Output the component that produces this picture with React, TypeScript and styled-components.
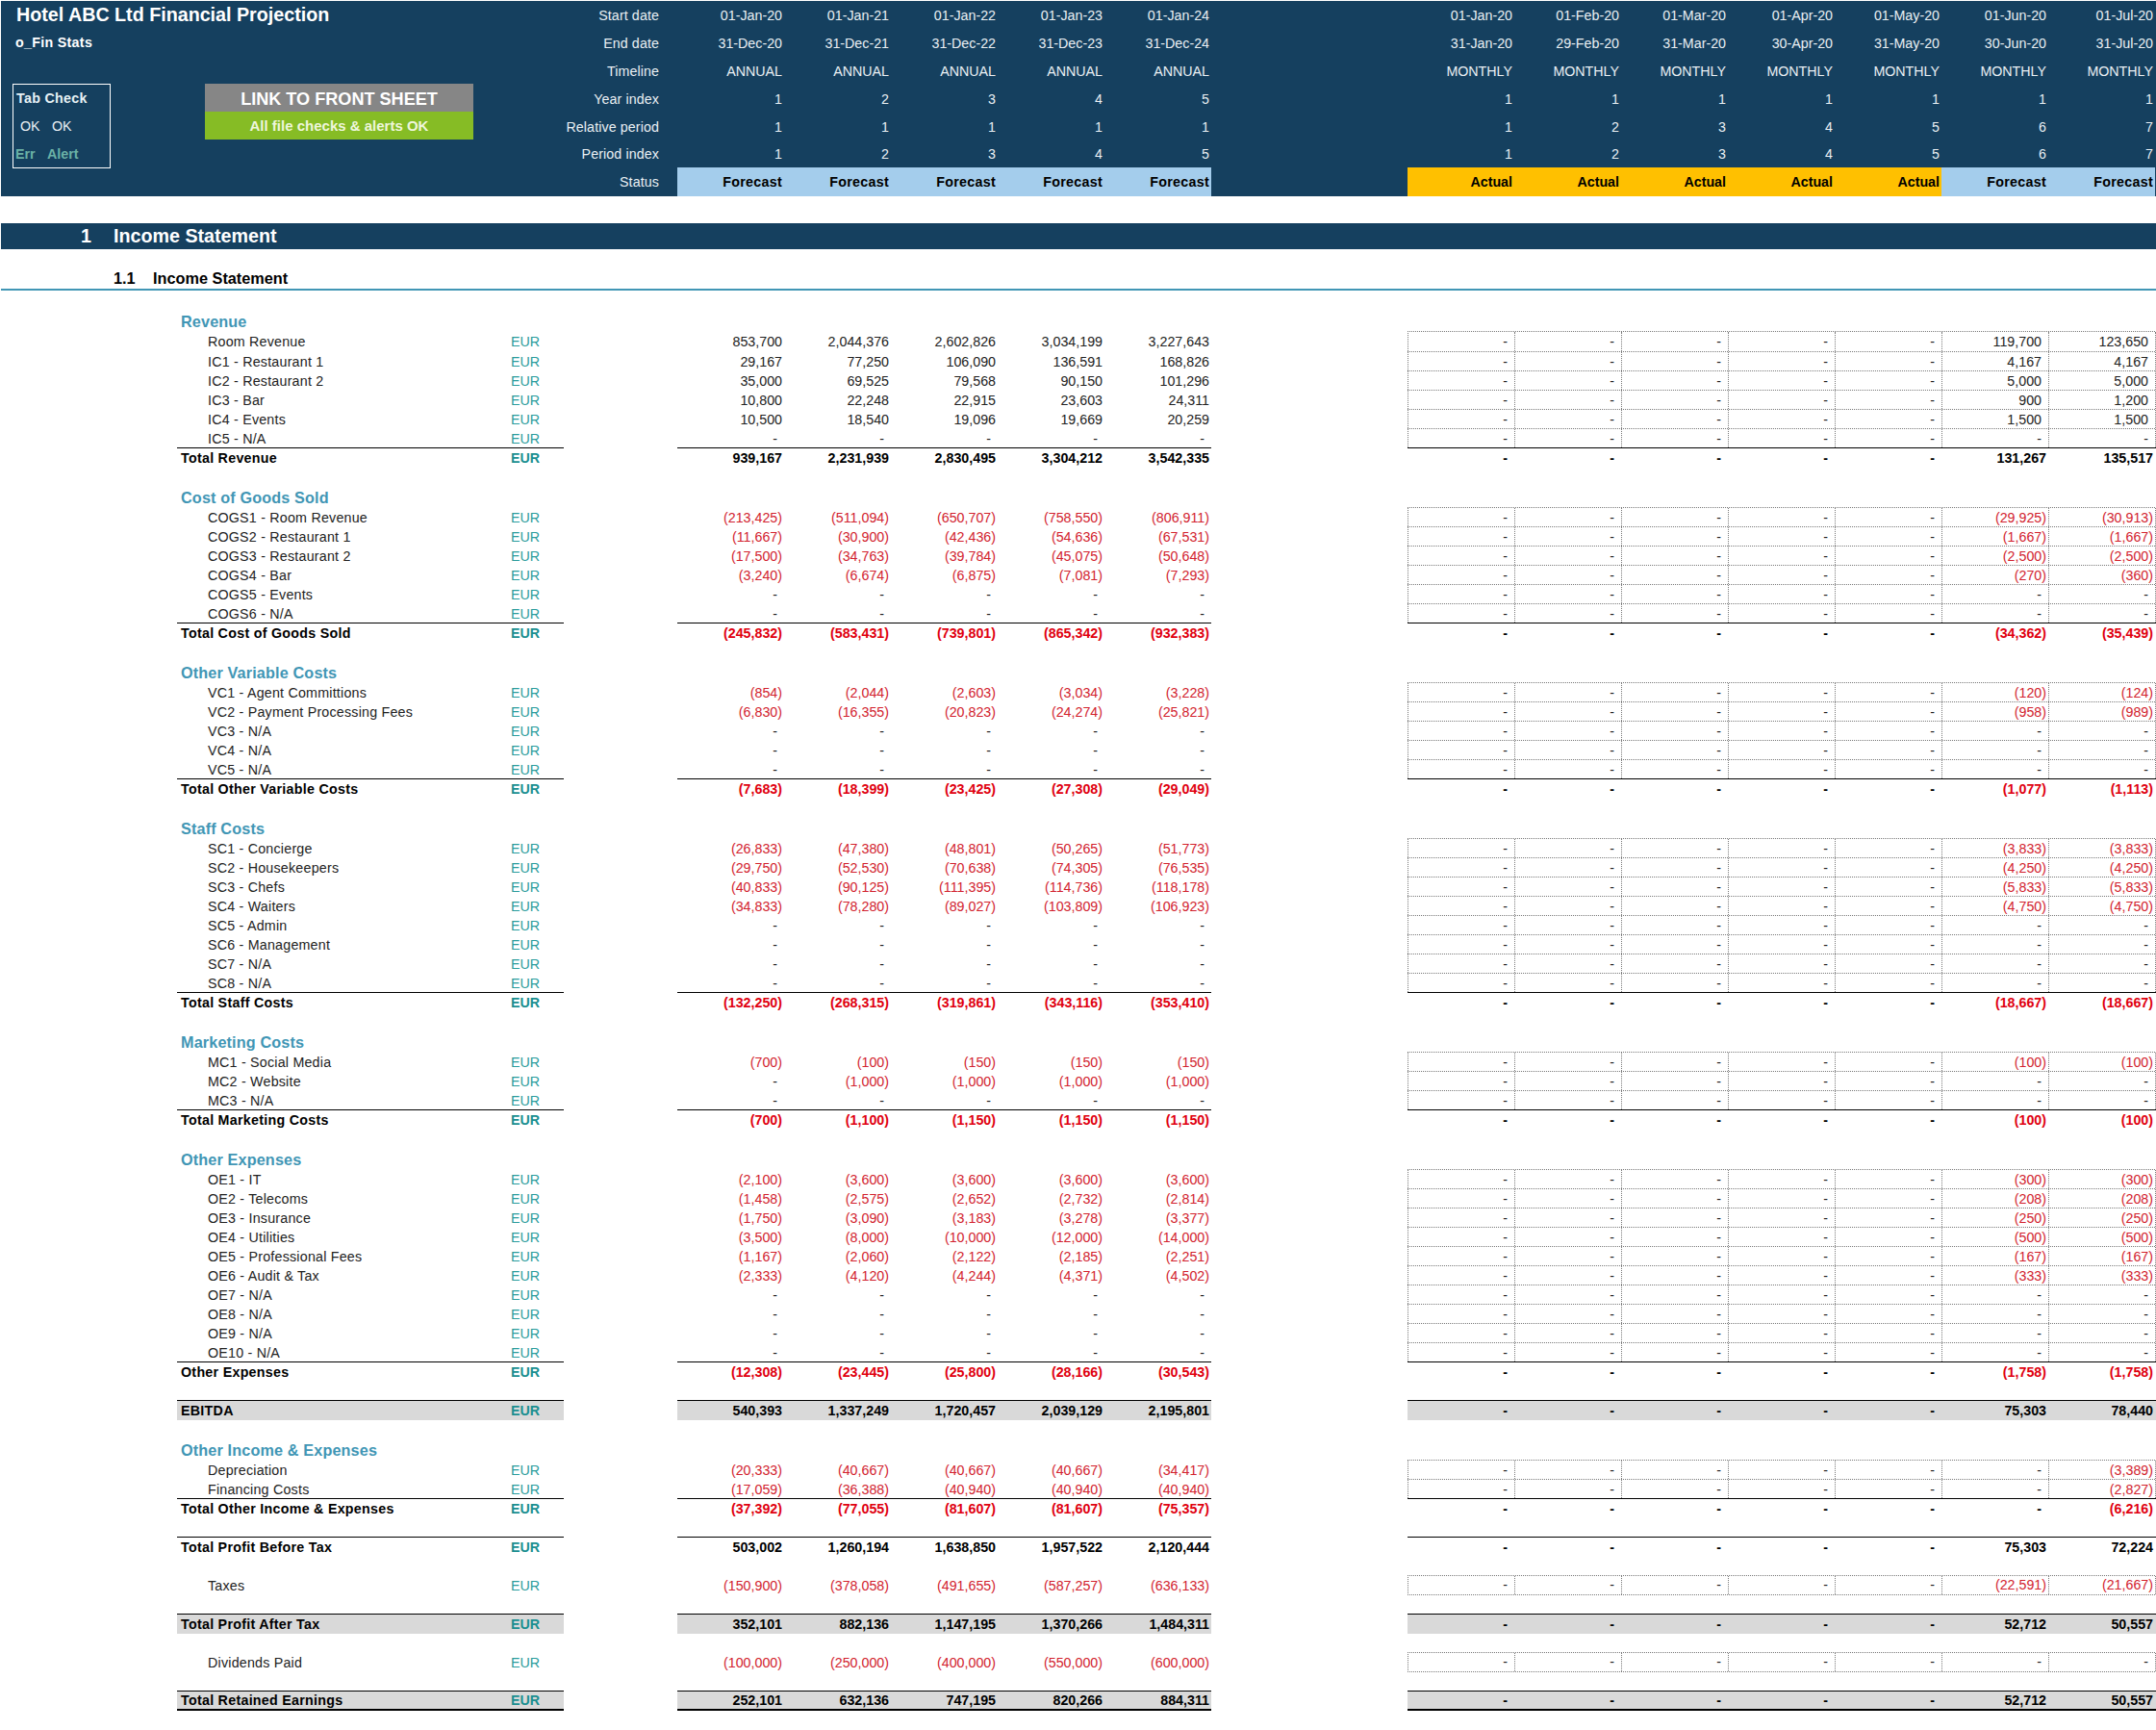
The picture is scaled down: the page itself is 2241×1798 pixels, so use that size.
import React from 'react'
import styled, { createGlobalStyle } from 'styled-components'

const NAVY = '#15405f'
const TEAL = '#4196b5'
const GREEN_TEAL = '#2b9c9c'

const GlobalStyle = createGlobalStyle`
  html, body {
    margin: 0;
    padding: 0;
    background: #fff;
  }
  body {
    font-family: 'Liberation Sans', Arial, sans-serif;
    font-size: 14.25px;
    color: #1c1c1c;
  }
`

const Sheet = styled.div`
  width: 2241px;
  overflow: hidden;
`

const Header = styled.header`
  display: grid;
  grid-template-columns: 703px 555px 204px 777px;
  height: 203px;
  margin: 1px 0 0 1px;
  background: ${NAVY};
  color: #e9eff3;
`

const TitlePane = styled.div`
  display: flex;
  min-width: 0;
`

const TitleColumn = styled.div`
  flex: 1;
`

const Title = styled.h1`
  margin: 0;
  height: 29px;
  padding-left: 16px;
  font-size: 19.7px;
  font-weight: 700;
  line-height: 28px;
  color: #fff;
`

const Subtitle = styled.div`
  height: 57px;
  padding-left: 15px;
  font-weight: 700;
  letter-spacing: 0.3px;
  line-height: 28px;
  color: #fff;
`

const ControlRow = styled.div`
  display: flex;
  align-items: flex-start;
  padding-left: 12px;
`

const CheckBox = styled.div`
  box-sizing: border-box;
  width: 102px;
  height: 88px;
  border: 1px solid #fff;
  padding-top: 1px;
`

const CheckLine = styled.div<{ $tone?: 'title' | 'alert' }>`
  display: flex;
  height: 29px;
  line-height: 27px;
  padding-left: ${p => (p.$tone === 'title' ? 3 : p.$tone === 'alert' ? 2 : 7)}px;
  font-weight: ${p => (p.$tone ? 700 : 400)};
  letter-spacing: ${p => (p.$tone === 'title' ? 0.3 : 0)}px;
  color: ${p => (p.$tone === 'alert' ? '#6bb1a6' : p.$tone === 'title' ? '#e6f1f5' : '#e9eff3')};
`

const CheckValue = styled.span`
  width: 33px;
`

const LinkPanel = styled.div`
  width: 279px;
  margin-left: 98px;
  text-align: center;
  font-weight: 700;
`

const LinkTitle = styled.div`
  height: 29px;
  background: #868686;
  color: #fff;
  font-size: 18.1px;
  line-height: 32px;
`

const LinkStatus = styled.div`
  height: 29px;
  background: #86bc25;
  color: #eef6dc;
  font-size: 15px;
  line-height: 30px;
`

const MetaLabels = styled.div`
  display: grid;
  grid-template-rows: repeat(5, 29px) 28px 30px;
  padding-right: 19px;
  letter-spacing: 0.1px;
  text-align: right;
`

const MetaLabel = styled.div`
  display: flex;
  align-items: center;
  justify-content: flex-end;
`

const TimeBlock = styled.div<{ $cols: number }>`
  display: grid;
  grid-template-columns: repeat(${p => p.$cols}, 111px);
  grid-template-rows: repeat(5, 29px) 28px 30px;
`

const TimeCell = styled.div`
  display: flex;
  align-items: center;
  justify-content: flex-end;
  padding-right: 2px;
  white-space: nowrap;
`

const StatusCell = styled(TimeCell)<{ $status: string }>`
  background: ${p => (p.$status === 'Actual' ? '#ffc000' : '#a4cdec')};
  color: #000;
  font-weight: 700;
  letter-spacing: ${p => (p.$status === 'Actual' ? 0 : 0.3)}px;
`

const SectionBar = styled.h2`
  display: flex;
  height: 27px;
  margin: 28px 0 0 1px;
  padding-left: 83px;
  background: ${NAVY};
  color: #fff;
  font-size: 19.7px;
  font-weight: 700;
  line-height: 27px;
`

const SectionNumber = styled.span`
  width: 34px;
`

const SubSection = styled.h3`
  display: flex;
  align-items: flex-end;
  box-sizing: border-box;
  height: 43px;
  margin: 0 0 0 1px;
  padding: 0 0 1px 117px;
  border-bottom: 2px solid ${TEAL};
  color: #000;
  font-size: 16.3px;
  font-weight: 700;
  line-height: 20px;
`

const SubNumber = styled.span`
  width: 41px;
`

// --lift nudges the text up in the 21px rows, the 20px rows sit on the bottom edge
const Row = styled.div<{ $h?: number; $lift?: boolean }>`
  --lift: ${p => (p.$lift ? 1 : 0)}px;
  display: grid;
  grid-template-columns: 184px 402px 118px 555px 204px 778px;
  height: ${p => p.$h ?? 20}px;
`

type Tone = 'item' | 'total' | 'band' | 'final'

const Ruled = styled.div<{ $tone: Tone }>`
  box-sizing: border-box;
  border-top: ${p => (p.$tone === 'item' ? 'none' : '1px solid #000')};
  border-bottom: ${p => (p.$tone === 'final' ? '2px solid #000' : 'none')};
  background: ${p => (p.$tone === 'band' || p.$tone === 'final' ? '#d9d9d9' : 'transparent')};
`

const LabelCell = styled(Ruled)`
  grid-column: 2;
  display: flex;
  align-items: flex-end;
  padding-bottom: var(--lift);
  line-height: 18px;
  white-space: nowrap;
`

const LineName = styled.span<{ $tone: Tone }>`
  box-sizing: border-box;
  width: 347px;
  padding-left: ${p => (p.$tone === 'item' ? 32 : 4)}px;
  font-weight: ${p => (p.$tone === 'item' ? 400 : 700)};
  letter-spacing: ${p => (p.$tone === 'item' ? 0.22 : 0.28)}px;
  color: ${p => (p.$tone === 'item' ? '#222' : '#000')};
`

const Unit = styled.span<{ $tone: Tone }>`
  font-weight: ${p => (p.$tone === 'item' ? 400 : 700)};
  color: ${p => (p.$tone === 'item' ? GREEN_TEAL : '#1a8f90')};
`

const GroupLabel = styled.div`
  grid-column: 2;
  align-self: end;
  padding-left: 4px;
  color: ${TEAL};
  font-size: 16.2px;
  font-weight: 700;
  letter-spacing: 0.15px;
  line-height: 19px;
  white-space: nowrap;
`

const ValueGrid = styled(Ruled)<{ $cols: number; $col: number }>`
  grid-column: ${p => p.$col};
  display: grid;
  grid-template-columns: repeat(${p => p.$cols}, 111px);
`

const Value = styled.div<{ $pad: number; $neg: boolean; $bold: boolean }>`
  display: flex;
  align-items: flex-end;
  justify-content: flex-end;
  padding-right: ${p => p.$pad}px;
  padding-bottom: var(--lift);
  line-height: 18px;
  white-space: nowrap;
  font-weight: ${p => (p.$bold ? 700 : 400)};
  color: ${p => (p.$neg ? (p.$bold ? '#e0000f' : '#d2232f') : p.$bold ? '#000' : '#222')};
`

// monthly input cells carry the dotted excel border
const InputGrid = styled.div<{ $closed: boolean }>`
  grid-column: 6;
  display: grid;
  grid-template-columns: repeat(7, 111px);
  box-sizing: border-box;
  width: 777px;
  border-top: 1px dotted #7a7a7a;
  border-left: 1px dotted #7a7a7a;
  border-bottom: ${p => (p.$closed ? '1px dotted #7a7a7a' : 'none')};
`

const InputValue = styled(Value)`
  box-sizing: border-box;
  border-right: 1px dotted #7a7a7a;
`

const padFor = (v: string, isInput: boolean) => {
  if (v === '-') return 7
  if (isInput && !v.startsWith('(')) return 7
  return 2
}

const dash5 = ['-', '-', '-', '-', '-']
const DASH2 = ['-', '-']

type Line =
  | { kind: 'group'; label: string; h?: number }
  | { kind: 'blank'; h?: number }
  | { kind: 'item'; label: string; annual: string[]; last: string[]; h?: number; closed?: boolean }
  | { kind: 'sum'; tone: Tone; label: string; annual: string[]; last: string[]; h?: number }

const g = (label: string, h = 42): Line => ({ kind: 'group', label, h })
const blank = (h = 20): Line => ({ kind: 'blank', h })
const i = (label: string, annual: string[] = dash5, last: string[] = DASH2, h?: number, closed?: boolean): Line => ({
  kind: 'item',
  label,
  annual,
  last,
  h,
  closed,
})
const t = (label: string, annual: string[], last: string[], tone: Tone = 'total', h?: number): Line => ({
  kind: 'sum',
  tone,
  label,
  annual,
  last,
  h,
})
const rep = (v: string, n: number) => Array(n).fill(v)

const lines: Line[] = [
  g('Revenue'),
  i('Room Revenue', ['853,700', '2,044,376', '2,602,826', '3,034,199', '3,227,643'], ['119,700', '123,650'], 21),
  i('IC1 - Restaurant 1', ['29,167', '77,250', '106,090', '136,591', '168,826'], ['4,167', '4,167']),
  i('IC2 - Restaurant 2', ['35,000', '69,525', '79,568', '90,150', '101,296'], ['5,000', '5,000']),
  i('IC3 - Bar', ['10,800', '22,248', '22,915', '23,603', '24,311'], ['900', '1,200']),
  i('IC4 - Events', ['10,500', '18,540', '19,096', '19,669', '20,259'], ['1,500', '1,500']),
  i('IC5 - N/A'),
  t('Total Revenue', ['939,167', '2,231,939', '2,830,495', '3,304,212', '3,542,335'], ['131,267', '135,517']),

  g('Cost of Goods Sold'),
  i('COGS1 - Room Revenue', ['(213,425)', '(511,094)', '(650,707)', '(758,550)', '(806,911)'], ['(29,925)', '(30,913)']),
  i('COGS2 - Restaurant 1', ['(11,667)', '(30,900)', '(42,436)', '(54,636)', '(67,531)'], ['(1,667)', '(1,667)']),
  i('COGS3 - Restaurant 2', ['(17,500)', '(34,763)', '(39,784)', '(45,075)', '(50,648)'], ['(2,500)', '(2,500)']),
  i('COGS4 - Bar', ['(3,240)', '(6,674)', '(6,875)', '(7,081)', '(7,293)'], ['(270)', '(360)']),
  i('COGS5 - Events'),
  i('COGS6 - N/A'),
  t('Total Cost of Goods Sold', ['(245,832)', '(583,431)', '(739,801)', '(865,342)', '(932,383)'], ['(34,362)', '(35,439)']),

  g('Other Variable Costs'),
  i('VC1 - Agent Committions', ['(854)', '(2,044)', '(2,603)', '(3,034)', '(3,228)'], ['(120)', '(124)']),
  i('VC2 - Payment Processing Fees', ['(6,830)', '(16,355)', '(20,823)', '(24,274)', '(25,821)'], ['(958)', '(989)']),
  i('VC3 - N/A'),
  i('VC4 - N/A'),
  i('VC5 - N/A'),
  t('Total Other Variable Costs', ['(7,683)', '(18,399)', '(23,425)', '(27,308)', '(29,049)'], ['(1,077)', '(1,113)']),

  g('Staff Costs'),
  i('SC1 - Concierge', ['(26,833)', '(47,380)', '(48,801)', '(50,265)', '(51,773)'], ['(3,833)', '(3,833)']),
  i('SC2 - Housekeepers', ['(29,750)', '(52,530)', '(70,638)', '(74,305)', '(76,535)'], ['(4,250)', '(4,250)']),
  i('SC3 - Chefs', ['(40,833)', '(90,125)', '(111,395)', '(114,736)', '(118,178)'], ['(5,833)', '(5,833)']),
  i('SC4 - Waiters', ['(34,833)', '(78,280)', '(89,027)', '(103,809)', '(106,923)'], ['(4,750)', '(4,750)']),
  i('SC5 - Admin'),
  i('SC6 - Management'),
  i('SC7 - N/A'),
  i('SC8 - N/A'),
  t('Total Staff Costs', ['(132,250)', '(268,315)', '(319,861)', '(343,116)', '(353,410)'], ['(18,667)', '(18,667)']),

  g('Marketing Costs'),
  i('MC1 - Social Media', ['(700)', '(100)', '(150)', '(150)', '(150)'], ['(100)', '(100)']),
  i('MC2 - Website', ['-', '(1,000)', '(1,000)', '(1,000)', '(1,000)']),
  i('MC3 - N/A'),
  t('Total Marketing Costs', ['(700)', '(1,100)', '(1,150)', '(1,150)', '(1,150)'], ['(100)', '(100)']),

  g('Other Expenses'),
  i('OE1 - IT', ['(2,100)', '(3,600)', '(3,600)', '(3,600)', '(3,600)'], ['(300)', '(300)']),
  i('OE2 - Telecoms', ['(1,458)', '(2,575)', '(2,652)', '(2,732)', '(2,814)'], ['(208)', '(208)']),
  i('OE3 - Insurance', ['(1,750)', '(3,090)', '(3,183)', '(3,278)', '(3,377)'], ['(250)', '(250)']),
  i('OE4 - Utilities', ['(3,500)', '(8,000)', '(10,000)', '(12,000)', '(14,000)'], ['(500)', '(500)']),
  i('OE5 - Professional Fees', ['(1,167)', '(2,060)', '(2,122)', '(2,185)', '(2,251)'], ['(167)', '(167)']),
  i('OE6 - Audit & Tax', ['(2,333)', '(4,120)', '(4,244)', '(4,371)', '(4,502)'], ['(333)', '(333)']),
  i('OE7 - N/A'),
  i('OE8 - N/A'),
  i('OE9 - N/A'),
  i('OE10 - N/A'),
  t('Other Expenses', ['(12,308)', '(23,445)', '(25,800)', '(28,166)', '(30,543)'], ['(1,758)', '(1,758)']),

  blank(),
  t('EBITDA', ['540,393', '1,337,249', '1,720,457', '2,039,129', '2,195,801'], ['75,303', '78,440'], 'band', 21),

  g('Other Income & Expenses', 41),
  i('Depreciation', ['(20,333)', '(40,667)', '(40,667)', '(40,667)', '(34,417)'], ['-', '(3,389)']),
  i('Financing Costs', ['(17,059)', '(36,388)', '(40,940)', '(40,940)', '(40,940)'], ['-', '(2,827)']),
  t('Total Other Income & Expenses', ['(37,392)', '(77,055)', '(81,607)', '(81,607)', '(75,357)'], ['-', '(6,216)']),

  blank(),
  t('Total Profit Before Tax', ['503,002', '1,260,194', '1,638,850', '1,957,522', '2,120,444'], ['75,303', '72,224']),

  blank(),
  i('Taxes', ['(150,900)', '(378,058)', '(491,655)', '(587,257)', '(636,133)'], ['(22,591)', '(21,667)'], 21, true),

  blank(19),
  t('Total Profit After Tax', ['352,101', '882,136', '1,147,195', '1,370,266', '1,484,311'], ['52,712', '50,557'], 'band', 21),

  blank(19),
  i('Dividends Paid', ['(100,000)', '(250,000)', '(400,000)', '(550,000)', '(600,000)'], DASH2, 21, true),

  blank(19),
  t('Total Retained Earnings', ['252,101', '632,136', '747,195', '820,266', '884,311'], ['52,712', '50,557'], 'final', 21),
]

const annualHead = [
  ['01-Jan-20', '01-Jan-21', '01-Jan-22', '01-Jan-23', '01-Jan-24'],
  ['31-Dec-20', '31-Dec-21', '31-Dec-22', '31-Dec-23', '31-Dec-24'],
  rep('ANNUAL', 5),
  ['1', '2', '3', '4', '5'],
  rep('1', 5),
  ['1', '2', '3', '4', '5'],
]

const monthlyHead = [
  ['01-Jan-20', '01-Feb-20', '01-Mar-20', '01-Apr-20', '01-May-20', '01-Jun-20', '01-Jul-20'],
  ['31-Jan-20', '29-Feb-20', '31-Mar-20', '30-Apr-20', '31-May-20', '30-Jun-20', '31-Jul-20'],
  rep('MONTHLY', 7),
  rep('1', 7),
  ['1', '2', '3', '4', '5', '6', '7'],
  ['1', '2', '3', '4', '5', '6', '7'],
]

const metaNames = ['Start date', 'End date', 'Timeline', 'Year index', 'Relative period', 'Period index', 'Status']

const TimeColumns = ({ head, status }: { head: string[][]; status: string[] }) => (
  <TimeBlock $cols={status.length}>
    {head.map((cells, r) => cells.map((c, k) => <TimeCell key={`${r}-${k}`}>{c}</TimeCell>))}
    {status.map((s, k) => (
      <StatusCell key={k} $status={s}>
        {s}
      </StatusCell>
    ))}
  </TimeBlock>
)

const ValueCells = ({ values, bold }: { values: string[]; bold: boolean }) => (
  <>
    {values.map((v, k) => (
      <Value key={k} $pad={padFor(v, false)} $neg={v.startsWith('(')} $bold={bold}>
        {v}
      </Value>
    ))}
  </>
)

const SheetRow = ({ line }: { line: Line }) => {
  if (line.kind === 'blank') return <Row $h={line.h} />
  if (line.kind === 'group') {
    return (
      <Row $h={line.h}>
        <GroupLabel>{line.label}</GroupLabel>
      </Row>
    )
  }
  const tone: Tone = line.kind === 'item' ? 'item' : line.tone
  const monthly = [...dash5, ...line.last]
  return (
    <Row $h={line.h} $lift={line.h === 21 && tone !== 'final'}>
      <LabelCell $tone={tone}>
        <LineName $tone={tone}>{line.label}</LineName>
        <Unit $tone={tone}>EUR</Unit>
      </LabelCell>
      <ValueGrid $tone={tone} $cols={5} $col={4}>
        <ValueCells values={line.annual} bold={tone !== 'item'} />
      </ValueGrid>
      {line.kind === 'item' ? (
        <InputGrid $closed={!!line.closed}>
          {monthly.map((v, k) => (
            <InputValue key={k} $pad={padFor(v, true)} $neg={v.startsWith('(')} $bold={false}>
              {v}
            </InputValue>
          ))}
        </InputGrid>
      ) : (
        <ValueGrid $tone={tone} $cols={7} $col={6}>
          <ValueCells values={monthly} bold />
        </ValueGrid>
      )}
    </Row>
  )
}

export default function App() {
  return (
    <Sheet>
      <GlobalStyle />
      <Header>
        <TitlePane>
          <TitleColumn>
            <Title>Hotel ABC Ltd Financial Projection</Title>
            <Subtitle>o_Fin Stats</Subtitle>
            <ControlRow>
              <CheckBox>
                <CheckLine $tone="title">Tab Check</CheckLine>
                <CheckLine>
                  <CheckValue>OK</CheckValue>
                  <CheckValue>OK</CheckValue>
                </CheckLine>
                <CheckLine $tone="alert">
                  <CheckValue>Err</CheckValue>
                  <CheckValue>Alert</CheckValue>
                </CheckLine>
              </CheckBox>
              <LinkPanel>
                <LinkTitle>LINK TO FRONT SHEET</LinkTitle>
                <LinkStatus>All file checks &amp; alerts OK</LinkStatus>
              </LinkPanel>
            </ControlRow>
          </TitleColumn>
          <MetaLabels>
            {metaNames.map(m => (
              <MetaLabel key={m}>{m}</MetaLabel>
            ))}
          </MetaLabels>
        </TitlePane>
        <TimeColumns head={annualHead} status={rep('Forecast', 5)} />
        <div />
        <TimeColumns
          head={monthlyHead}
          status={['Actual', 'Actual', 'Actual', 'Actual', 'Actual', 'Forecast', 'Forecast']}
        />
      </Header>
      <SectionBar>
        <SectionNumber>1</SectionNumber>
        Income Statement
      </SectionBar>
      <SubSection>
        <SubNumber>1.1</SubNumber>
        Income Statement
      </SubSection>
      {lines.map((line, k) => (
        <SheetRow key={k} line={line} />
      ))}
    </Sheet>
  )
}
